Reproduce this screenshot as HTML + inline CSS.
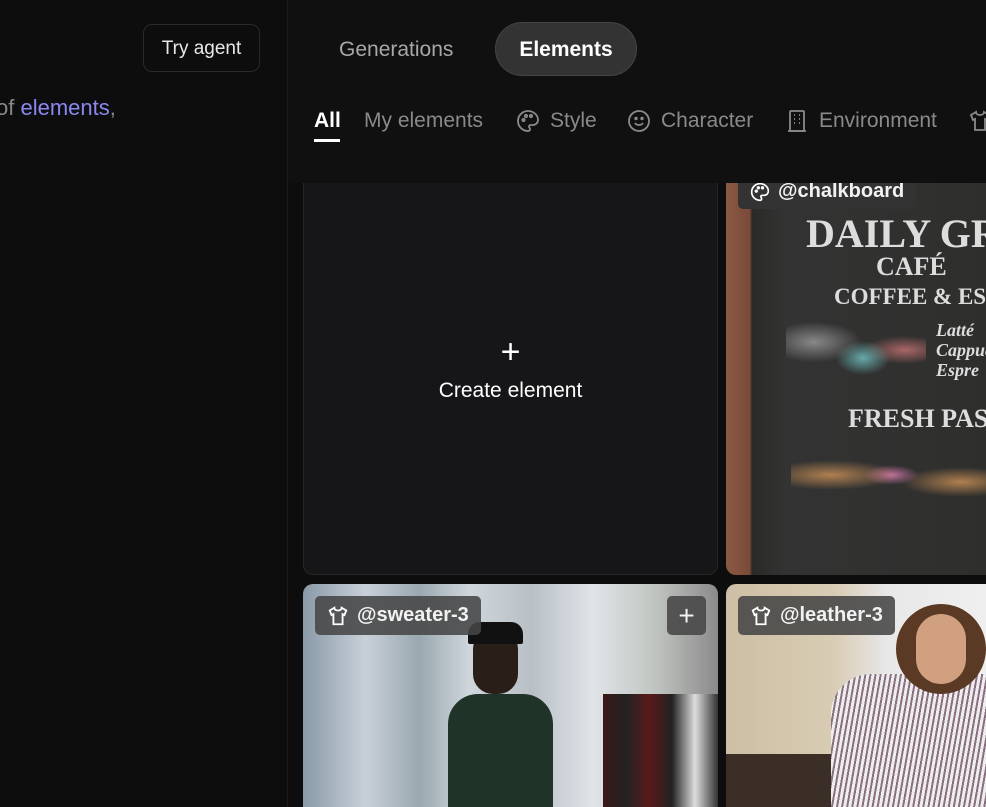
<!DOCTYPE html>
<html style="height:807px;overflow:hidden"><head><style>
body{margin:0;width:986px;height:807px;background:#0d0d0d;font-family:"Liberation Sans",sans-serif;overflow:hidden;position:relative;color:#fff}
.left{position:absolute;left:0;top:0;width:287px;height:807px;background:#0d0d0d;border-right:1px solid #1c1c1c;z-index:3}
.btn{position:absolute;left:143px;top:24px;width:117px;height:48px;border:1px solid #2a2a2a;border-radius:9px;font-size:19px;line-height:48px;text-align:center;color:#e8e8e8;box-sizing:border-box}
.lt{position:absolute;left:-4px;top:95px;font-size:22px;color:#888}
.lt span{color:#8a88f0}
.top{position:absolute;left:288px;top:0;right:0;height:183px;background:#101010;z-index:2}
.tab{position:absolute;top:23px;height:54px;line-height:54px;font-size:21px}
.sub{position:absolute;top:109px;font-size:21px;color:#8a8a8a;display:flex;align-items:center;gap:10px;white-space:nowrap}
.card{position:absolute;border-radius:10px;overflow:hidden}
.tag{position:absolute;background:rgba(70,70,70,.88);border-radius:5px;height:39px;font-size:20px;font-weight:bold;display:flex;align-items:center;gap:8px;padding:0 12px;color:#f2f2f2;z-index:1;white-space:nowrap}
.cb{position:absolute;font-family:"Liberation Serif",serif;font-weight:bold;color:#ddd;white-space:nowrap}
</style></head><body>
<div class="left">
<div class="btn">Try agent</div>
<div class="lt">of <span>elements</span>,</div>
</div>
<div class="top">
<div class="tab" style="left:51px;color:#a8a8a8">Generations</div>
<div class="tab" style="left:207px;top:22px;width:142px;background:#333;border:1px solid #444;border-radius:27px;text-align:center;box-sizing:border-box;font-weight:bold">Elements</div>
<div class="sub" style="left:26px;color:#fff;font-weight:bold">All</div>
<div style="position:absolute;left:26px;top:139px;width:26px;height:3px;background:#fff"></div>
<div class="sub" style="left:76px">My elements</div>
<div class="sub" style="left:228px"><svg width="24" height="24" viewBox="0 0 24 24" fill="none" stroke="#8a8a8a" stroke-width="1.8"><path d="M12 2a10 10 0 1 0 0 20c1.5 0 2-1 2-2s-1-1.5-1-2.5 1-1.5 2-1.5h2a5 5 0 0 0 5-5C22 6 17.5 2 12 2z"/><circle cx="7.5" cy="11" r="1.2"/><circle cx="10" cy="7" r="1.2"/><circle cx="15" cy="7" r="1.2"/></svg>Style</div>
<div class="sub" style="left:339px"><svg width="24" height="24" viewBox="0 0 24 24" fill="none" stroke="#8a8a8a" stroke-width="1.8"><circle cx="12" cy="12" r="10"/><path d="M8 14c1 1.5 2.5 2 4 2s3-.5 4-2"/><circle cx="9" cy="9.5" r=".8"/><circle cx="15" cy="9.5" r=".8"/></svg>Character</div>
<div class="sub" style="left:497px"><svg width="24" height="24" viewBox="0 0 24 24" fill="none" stroke="#8a8a8a" stroke-width="1.8"><rect x="5" y="2" width="14" height="20" rx="1"/><path d="M9 6h1M14 6h1M9 10h1M14 10h1M9 14h1M14 14h1M3 22h18"/></svg>Environment</div>
<div class="sub" style="left:680px"><svg width="24" height="24" viewBox="0 0 24 24" fill="none" stroke="#8a8a8a" stroke-width="1.8"><path d="M8 3L3 6l2 5 2-1v11h10V10l2 1 2-5-5-3c0 2-2 3-4 3S8 5 8 3z"/></svg></div>
</div>
<div class="card" style="left:303px;top:170px;width:415px;height:405px;background:#161618;border:1px solid #262626;box-sizing:border-box">
<div style="position:absolute;left:0;right:0;top:162px;text-align:center;font-size:34px;font-weight:300">+</div>
<div style="position:absolute;left:0;right:0;top:208px;text-align:center;font-size:21px">Create element</div>
</div>
<div class="card" style="left:726px;top:170px;width:270px;height:405px;border-radius:10px 0 10px 10px;background:linear-gradient(90deg,#8a5a44 0,#7a4a38 24px,#2a2a28 26px,#333 60px,#2e2e2c 100%)">
<div class="cb" style="left:80px;top:40px;font-size:40px">DAILY GR</div>
<div class="cb" style="left:150px;top:82px;font-size:26px">CAFÉ</div>
<div class="cb" style="left:108px;top:114px;font-size:23px">COFFEE &amp; ESPR</div>
<div class="cb" style="left:210px;top:150px;font-size:18px;font-style:italic;line-height:20px">Latté<br>Cappuc<br>Espre</div>
<div class="cb" style="left:122px;top:234px;font-size:26px">FRESH PASTR</div>
<div style="position:absolute;left:65px;top:270px;width:200px;height:70px;background:radial-gradient(ellipse at 20% 50%,#b08050 0,transparent 30%),radial-gradient(ellipse at 50% 50%,#c070a0 0,transparent 20%),radial-gradient(ellipse at 85% 60%,#b08050 0,transparent 25%)"></div>
<div style="position:absolute;left:60px;top:140px;width:140px;height:80px;background:radial-gradient(ellipse at 20% 40%,#888 0,transparent 30%),radial-gradient(ellipse at 55% 60%,#6aa 0,transparent 25%),radial-gradient(ellipse at 85% 50%,#a66 0,transparent 25%)"></div>
</div>
<div class="tag" style="left:738px;top:174px;height:35px;border-radius:0 0 5px 5px;background:#333"><svg width="20" height="20" viewBox="0 0 24 24" fill="none" stroke="#fff" stroke-width="2"><path d="M12 2a10 10 0 1 0 0 20c1.5 0 2-1 2-2s-1-1.5-1-2.5 1-1.5 2-1.5h2a5 5 0 0 0 5-5C22 6 17.5 2 12 2z"/><circle cx="7.5" cy="11" r="1"/><circle cx="10" cy="7" r="1"/><circle cx="15" cy="7" r="1"/></svg>@chalkboard</div>
<div class="card" style="left:303px;top:584px;width:415px;height:240px;background:linear-gradient(90deg,#8a9aa8 0,#c8d0d8 15%,#9aa8b0 28%,#cfd6dc 40%,#b8c0c6 55%,#e0e4e8 70%,#c0c4c0 85%,#8a8a8a 100%)">
<div style="position:absolute;left:145px;top:110px;width:105px;height:130px;background:#1f3328;border-radius:30px 30px 0 0"></div>
<div style="position:absolute;left:170px;top:45px;width:45px;height:65px;background:#2a1e18;border-radius:20px"></div>
<div style="position:absolute;left:165px;top:38px;width:55px;height:22px;background:#111;border-radius:12px 12px 2px 2px"></div>
<div style="position:absolute;left:300px;top:110px;width:115px;height:130px;background:linear-gradient(90deg,#3a1818,#222 20%,#5a1a1a 40%,#222 60%,#ddd 80%,#333)"></div>
</div>
<div class="tag" style="left:315px;top:596px"><svg width="22" height="22" viewBox="0 0 24 24" fill="none" stroke="#fff" stroke-width="2"><path d="M8 3L3 6l2 5 2-1v11h10V10l2 1 2-5-5-3c0 2-2 3-4 3S8 5 8 3z"/></svg>@sweater-3</div>
<div class="tag" style="left:667px;top:596px;width:39px;padding:0;justify-content:center;font-size:28px;font-weight:normal">+</div>
<div class="card" style="left:726px;top:584px;width:270px;height:240px;border-radius:10px 0 0 0;background:linear-gradient(90deg,#cdbfa5 0,#d8ccb4 40%,#e8e8e8 60%,#f0f0f0 100%)">
<div style="position:absolute;left:0;top:170px;width:130px;height:70px;background:#3a2e26"></div>
<div style="position:absolute;left:105px;top:90px;width:170px;height:150px;background:repeating-linear-gradient(100deg,#eee 0 3px,#8a7080 3px 5px);border-radius:40px 0 0 0"></div>
<div style="position:absolute;left:170px;top:20px;width:90px;height:90px;background:#5a3a24;border-radius:45px"></div>
<div style="position:absolute;left:190px;top:30px;width:50px;height:70px;background:#d0a080;border-radius:25px"></div>
</div>
<div class="tag" style="left:738px;top:596px"><svg width="22" height="22" viewBox="0 0 24 24" fill="none" stroke="#fff" stroke-width="2"><path d="M8 3L3 6l2 5 2-1v11h10V10l2 1 2-5-5-3c0 2-2 3-4 3S8 5 8 3z"/></svg>@leather-3</div>
</body></html>
